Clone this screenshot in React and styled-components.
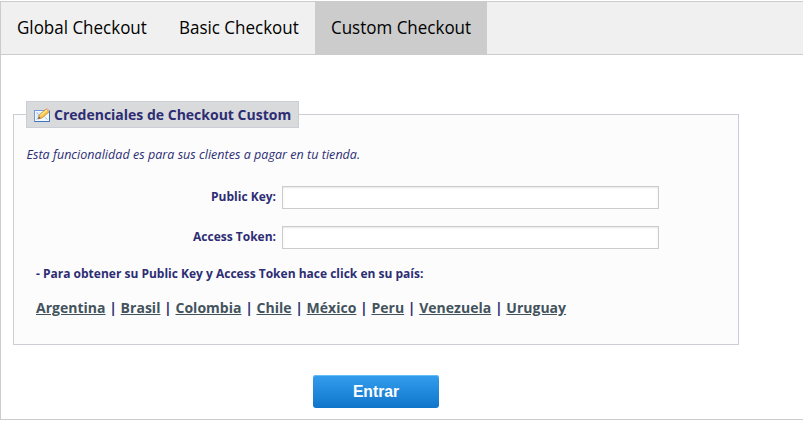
import React from 'react';
import styled, { createGlobalStyle } from 'styled-components';

const GlobalStyle = createGlobalStyle`
  * { box-sizing: border-box; }
  body { margin: 0; background: #fff; overflow: hidden; font-family: "Open Sans", "Noto Sans", sans-serif; }
`;

const Panel = styled.main`
  width: 804px;
  height: 419px;
  margin-top: 1px;
  border: 1px solid #ccc;
`;

const TabBar = styled.nav`
  display: flex;
  height: 53px;
  background: #f0f0f0;
  border-bottom: 1px solid #ccc;
`;

const Tab = styled.button`
  height: 53px;
  width: ${(p) => p.$width}px;
  padding: 0 0 4px 16px;
  border: 0;
  text-align: left;
  white-space: nowrap;
  background: ${(p) => (p.$active ? '#ccc' : 'transparent')};
  color: #000;
  font: 18px "Open Sans", sans-serif;
`;

const TabLabel = styled.span`
  display: inline-block;
  transform: scaleX(0.944);
  transform-origin: left center;
`;

const Form = styled.form`
  padding: 46px 0 0 12px;
`;

const Group = styled.fieldset`
  width: 726px;
  height: 244px;
  margin: 0;
  padding: 0 12px;
  border: 1px solid #ccced7;
  background: #fcfcfc;
  color: #2d2d74;
`;

const Legend = styled.legend`
  display: flex;
  align-items: center;
  width: 273px;
  height: 27px;
  padding: 0 0 0 7px;
  gap: 4px;
  border: 1px solid #ccced7;
  background: #d9dadb;
  font-size: 14px;
  font-weight: 700;
  white-space: nowrap;
`;

const Intro = styled.p`
  margin: 17px 0 0;
  padding-left: 0.5px;
  font-size: 12.5px;
  letter-spacing: 0.035px;
  line-height: 20px;
  font-style: italic;
`;

const Field = styled.label`
  display: grid;
  grid-template-columns: 250px 377px;
  column-gap: 6px;
  align-items: center;
  height: 23px;
  margin-top: ${(p) => p.$top}px;
  font-size: 12px;
  font-weight: 700;
`;

const FieldName = styled.span`
  text-align: right;
  padding-bottom: 2px;
  white-space: nowrap;
`;

const TextInput = styled.input`
  width: 377px;
  height: 23px;
  border: 1px solid #ccc;
  border-radius: 0;
  background: #fff;
  box-shadow: inset 0 1px 2px rgba(0, 0, 0, 0.1);
  outline: 0;
`;

const Hint = styled.p`
  margin: 15px 0 0 10px;
  font-size: 12px;
  line-height: 20px;
  font-weight: 700;
`;

const Countries = styled.p`
  margin: 14px 0 0 10px;
  font-size: 14px;
  letter-spacing: 0.016px;
  line-height: 20px;
  font-weight: 700;
  white-space: nowrap;
`;

const CountryLink = styled.a`
  color: #43535d;
  text-decoration: underline;
`;

const Submit = styled.button`
  display: block;
  width: 126px;
  height: 33px;
  margin: 30px 0 0 300px;
  padding: 0;
  border: 0;
  border-radius: 3px;
  background: linear-gradient(#349eee, #0f75c9);
  box-shadow: inset 0 1px 0 #62bdf8;
  color: #fff;
  font: 700 15.7px "Liberation Sans", Arial, sans-serif;
`;

const EditIcon = () => (
  <svg width="16" height="16" viewBox="0 0 16 16" aria-hidden="true">
    <rect x="0.5" y="3.5" width="15" height="11" fill="#f5f9fd" stroke="#6b9bd8" />
    <path d="M.5 14.5h15v-11" fill="none" stroke="#3f74bd" />
    <path d="M2 5h9L5 13H2z" fill="#dfeafa" />
    <path d="M2.5 5.5l3.5 3.5M2.5 12.5L5 10.5M13.5 12.5L10.5 10" stroke="#a9c2e4" />
    <path d="M4.3 11.8l.9-3.8 7-6 3 2.8-7 6z" fill="#f7c64d" stroke="#bd842d" strokeWidth=".8" />
    <path d="M6.5 8.4l6.2-5.3" stroke="#fff09c" strokeWidth="1.2" />
    <path d="M12 2.2l1.2-1.2 2.5 2.3-1.2 1.5z" fill="#f3b19c" />
    <path d="M4.2 11.9l.7-2.3 1.8 1.6z" fill="#765b43" />
  </svg>
);

const tabs = [['Global Checkout', 162], ['Basic Checkout', 152], ['Custom Checkout', 172]];
const countries = ['Argentina', 'Brasil', 'Colombia', 'Chile', 'México', 'Peru', 'Venezuela', 'Uruguay'];

export default function App() {
  return (
    <>
      <GlobalStyle />
      <Panel>
        <TabBar>
          {tabs.map(([name, width], i) => (
            <Tab key={name} $width={width} $active={i === 2}><TabLabel>{name}</TabLabel></Tab>
          ))}
        </TabBar>
        <Form>
          <Group>
            <Legend><EditIcon />Credenciales de Checkout Custom</Legend>
            <Intro>Esta funcionalidad es para sus clientes a pagar en tu tienda.</Intro>
            <Field $top={21}><FieldName>Public Key:</FieldName><TextInput /></Field>
            <Field $top={17}><FieldName>Access Token:</FieldName><TextInput /></Field>
            <Hint>- Para obtener su Public Key y Access Token hace click en su país:</Hint>
            <Countries>
              {countries.map((name, i) => (
                <React.Fragment key={name}>
                  {i > 0 && ' | '}
                  <CountryLink>{name}</CountryLink>
                </React.Fragment>
              ))}
            </Countries>
          </Group>
          <Submit type="button">Entrar</Submit>
        </Form>
      </Panel>
    </>
  );
}
